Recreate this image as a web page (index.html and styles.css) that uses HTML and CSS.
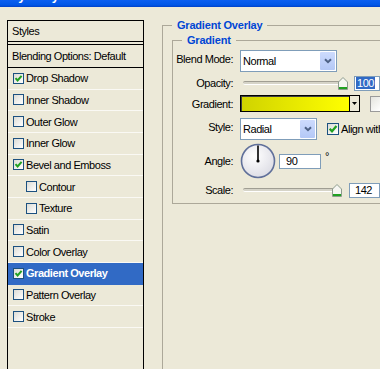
FILE: index.html
```html
<!DOCTYPE html>
<html lang="en">
<head>
    <meta charset="UTF-8">
    <meta name="viewport" content="width=device-width, initial-scale=1.0">
    <title>Layer Style</title>
    <link rel="stylesheet" href="styles.css">
</head>
<body>
    <div class="titlebar"><span class="title">Layer Style</span></div>

    <div class="dialog">
        <!-- styles list -->
        <div class="styles-list">
            <div class="head">Styles</div>
            <div class="blending">Blending Options: Default</div>
            <div class="row"><span class="check on"><svg width="9" height="9" viewBox="0 0 9 9"><path d="M1.5 4.2 L3.6 6.5 L7.6 1.8"/></svg></span>Drop Shadow</div>
            <div class="row"><span class="check"></span>Inner Shadow</div>
            <div class="row"><span class="check"></span>Outer Glow</div>
            <div class="row"><span class="check"></span>Inner Glow</div>
            <div class="row"><span class="check on"><svg width="9" height="9" viewBox="0 0 9 9"><path d="M1.5 4.2 L3.6 6.5 L7.6 1.8"/></svg></span>Bevel and Emboss</div>
            <div class="row sub"><span class="check"></span>Contour</div>
            <div class="row sub"><span class="check"></span>Texture</div>
            <div class="row"><span class="check"></span>Satin</div>
            <div class="row"><span class="check"></span>Color Overlay</div>
            <div class="row selected"><span class="check on"><svg width="9" height="9" viewBox="0 0 9 9"><path d="M1.5 4.2 L3.6 6.5 L7.6 1.8"/></svg></span>Gradient Overlay</div>
            <div class="row"><span class="check"></span>Pattern Overlay</div>
            <div class="row"><span class="check"></span>Stroke</div>
        </div>

        <!-- options -->
        <div class="options">
            <fieldset class="group outer">
                <legend>Gradient Overlay</legend>
                <fieldset class="group inner">
                    <legend>Gradient</legend>

                    <div class="field row-blend">
                        <span class="lbl up">Blend Mode:</span>
                        <div class="select blend">
                            <span class="value">Normal</span>
                            <span class="drop"><svg width="8" height="6" viewBox="0 0 8 6"><path d="M1 1.2 L4 4.2 L7 1.2"/></svg></span>
                        </div>
                    </div>

                    <div class="field row-opacity">
                        <span class="lbl">Opacity:</span>
                        <div class="slider">
                            <span class="track" style="width: 100px"></span>
                            <svg class="thumb" width="10" height="13" viewBox="0 0 10 13"><path d="M0.5 12.5 V5 L5 0.5 L9.5 5 V12.5 Z"/><rect x="1" y="10" width="8" height="2"/></svg>
                        </div>
                        <span class="input opacity"><span class="sel">100</span></span>
                    </div>

                    <div class="field row-gradient">
                        <span class="lbl">Gradient:</span>
                        <div class="gradient">
                            <span class="fill"></span>
                            <span class="arrow"><svg width="5" height="3" viewBox="0 0 5 3"><path d="M0 0 H5 L2.5 3 Z"/></svg></span>
                        </div>
                        <span class="reverse"></span>
                    </div>

                    <div class="field row-style">
                        <span class="lbl up">Style:</span>
                        <div class="select style">
                            <span class="value">Radial</span>
                            <span class="drop"><svg width="8" height="6" viewBox="0 0 8 6"><path d="M1 1.2 L4 4.2 L7 1.2"/></svg></span>
                        </div>
                        <span class="check on big"><svg width="10" height="10" viewBox="0 0 9 9"><path d="M1.5 4.2 L3.6 6.5 L7.6 1.8"/></svg></span>
                        <span class="align">Align with</span>
                    </div>

                    <div class="field row-angle">
                        <span class="lbl">Angle:</span>
                        <svg class="dial" width="36" height="36" viewBox="0 0 36 36">
                            <defs>
                                <radialGradient id="dialFill" cx="0.4" cy="0.35" r="0.7">
                                    <stop offset="0" stop-color="#ffffff"/>
                                    <stop offset="1" stop-color="#dcdce4"/>
                                </radialGradient>
                            </defs>
                            <circle cx="18" cy="18" r="16.5" fill="url(#dialFill)" stroke="#60709a" stroke-width="1.6"/>
                            <line x1="18" y1="18" x2="18" y2="2.5" stroke="#000" stroke-width="1.6"/>
                            <circle cx="18" cy="18" r="1.6" fill="#000"/>
                        </svg>
                        <span class="input angle">90</span>
                        <span class="deg">°</span>
                    </div>

                    <div class="field row-scale">
                        <span class="lbl">Scale:</span>
                        <div class="slider">
                            <span class="track" style="width: 94px"></span>
                            <svg class="thumb" width="10" height="13" viewBox="0 0 10 13"><path d="M0.5 12.5 V5 L5 0.5 L9.5 5 V12.5 Z"/><rect x="1" y="10" width="8" height="2"/></svg>
                        </div>
                        <span class="input scale">142</span>
                    </div>
                </fieldset>
            </fieldset>
        </div>
    </div>
</body>
</html>
```

FILE: styles.css
```css
body {
    margin: 0;
    height: 369px;
    overflow: hidden;
    background: #ece9d8;
    font-family: 'Liberation Sans', Arial, sans-serif;
    font-size: 11px;
    letter-spacing: -0.45px;
    color: #000;
}

/* window title bar, only its lower edge is visible */
.titlebar {
    height: 7px;
    overflow: hidden;
    padding-left: 4px;
    background: linear-gradient(#0b5ff0, #0057e7 70%, #0040c8);
}

.titlebar .title {
    display: block;
    margin-top: -11px;
    color: #fff;
    font-weight: bold;
    font-size: 13px;
    line-height: 13px;
}

.dialog {
    display: flex;
    align-items: flex-start;
    padding-top: 13px;
}

/* left list */
.styles-list {
    flex: none;
    width: 137px;
    height: 360px;
    margin-left: 7px;
    box-sizing: border-box;
    border: 1px solid #000;
    border-bottom: none;
}

.head {
    height: 20px;
    line-height: 20px;
    padding-left: 4px;
    border-bottom: 1px solid #000;
}

.blending {
    height: 24px;
    box-sizing: border-box;
    margin-top: 2px;
    line-height: 22px;
    padding-left: 4px;
    border-top: 1px solid #000;
    border-bottom: 1px solid #000;
}

.row {
    display: flex;
    align-items: center;
    gap: 2px;
    height: 21.67px;
    box-sizing: border-box;
    padding-left: 5px;
    border-bottom: 1px solid #faf9f4;
}

.row.sub {
    padding-left: 18px;
}

.row.selected {
    background: #316ac5;
    color: #fff;
    font-weight: bold;
    border-bottom-color: #316ac5;
}

.check {
    flex: none;
    display: flex;
    align-items: center;
    justify-content: center;
    width: 11px;
    height: 11px;
    box-sizing: border-box;
    border: 1px solid #1c5180;
    background: linear-gradient(135deg, #dcdcd5, #fff);
}

.check svg path {
    fill: none;
    stroke: #21a121;
    stroke-width: 2;
}

.check.big {
    width: 12px;
    height: 12px;
    margin-left: 10px;
}

/* right side */
.options {
    margin-left: 18px;
    margin-top: -1px;
}

.group {
    margin: 0;
    min-width: 0;
    border: 1px solid #aca899;
}

.group legend {
    padding: 0 5px;
    line-height: 13px;
    font-weight: bold;
    color: #0046d5;
    letter-spacing: -0.2px;
}

.outer {
    width: 300px;
    height: 400px;
    padding: 2px 0 0 9px;
}

.inner {
    padding: 3px 0 0 0;
}

.inner legend {
    margin-left: 9px;
}

.field {
    display: flex;
    align-items: center;
}

.row-blend { height: 22px; }
.row-opacity { height: 22px; }
.row-gradient { height: 19px; }
.row-style { height: 32px; }
.row-angle { height: 32px; }
.row-scale { height: 26px; }

.lbl {
    flex: none;
    width: 60px;
    margin-right: 7px;
    text-align: right;
    white-space: nowrap;
}

.lbl.up {
    padding-bottom: 5px;
}

.select {
    flex: none;
    display: flex;
    height: 22px;
    box-sizing: border-box;
    border: 1px solid #7f9db9;
    background: #fff;
}

.select.blend { width: 97px; }
.select.style { width: 77px; }

.select .value {
    flex: 1;
    padding-left: 2px;
    line-height: 21px;
}

.select .drop {
    display: flex;
    align-items: center;
    justify-content: center;
    width: 15px;
    margin: 1px;
    border-radius: 1px;
    background: linear-gradient(#cddbfd, #b4c8f6);
}

.select .drop path {
    fill: none;
    stroke: #4d6185;
    stroke-width: 2;
}

.slider {
    flex: none;
    display: flex;
    align-items: center;
    margin-left: 3px;
}

.track {
    height: 2px;
    border-top: 1px solid #a09e93;
    border-bottom: 1px solid #fff;
    border-radius: 2px;
    background: #d6d4c8;
}

.thumb {
    margin-left: -5px;
}

.thumb path {
    fill: #f6f6f2;
    stroke: #8d9c8d;
}

.thumb rect {
    fill: #21a121;
}

.input {
    flex: none;
    width: 42px;
    height: 15px;
    box-sizing: border-box;
    border: 1px solid #7f9db9;
    background: #fff;
    line-height: 13px;
    padding-left: 5px;
}

.input.opacity {
    width: 26px;
    margin-left: 6px;
    padding-left: 1px;
}

.input.opacity .sel {
    padding: 0 1px;
    background: #316ac5;
    color: #fff;
}

.input.scale {
    width: 31px;
    margin-left: 7px;
}

.input.angle {
    margin-left: 3px;
    padding-left: 6px;
}

.deg {
    align-self: flex-start;
    margin-top: 5px;
    margin-left: 4px;
}

.gradient {
    flex: none;
    display: flex;
    width: 120px;
    height: 17px;
    box-sizing: border-box;
    border: 1px solid #000;
    box-shadow: inset 1px 1px 0 #404040;
}

.gradient .fill {
    flex: 1;
    margin: 1px 0 0 1px;
    background: linear-gradient(to right, #d0d300, #ffff00);
}

.gradient .arrow {
    display: flex;
    align-items: center;
    justify-content: center;
    width: 9px;
    border-left: 1px solid #000;
    background: #ece9d8;
}

.reverse {
    flex: none;
    width: 10px;
    height: 16px;
    margin-left: 10px;
    box-sizing: border-box;
    border: 1px solid #9a9a9a;
    border-right: none;
    background: linear-gradient(135deg, #e4e4de, #fff);
}

.align {
    margin-left: 2px;
    white-space: nowrap;
}

.dial {
    flex: none;
}
```
